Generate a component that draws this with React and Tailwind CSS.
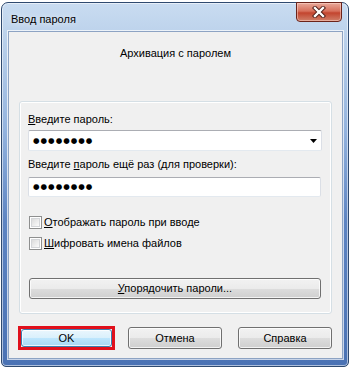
import React from 'react';

const font = { fontFamily: '"Liberation Sans", Arial, sans-serif' };

// Кнопка в стиле Windows 7
const WinButton = ({ children, className = '', focused = false }) => (
    <div
        className={`flex items-center justify-center rounded-[3px] border text-[11px] text-black leading-none ${focused
            ? 'border-[#3c7fb1] bg-[linear-gradient(#eaf6fd_0%,#d9f0fc_50%,#bee6fd_50%,#a7d9f5_100%)]'
            : 'border-[#707070] bg-[linear-gradient(#f2f2f2_0%,#ebebeb_50%,#dddddd_50%,#cfcfcf_100%)]'
            } shadow-[inset_0_0_0_1px_rgba(255,255,255,0.75)] ${className}`}
    >
        {children}
    </div>
);

const Checkbox = ({ children }) => (
    <div className="flex items-center h-[16px]">
        <div className="w-[13px] h-[13px] border border-[#8e8f8f] bg-white p-[1px]">
            <div className="w-full h-full border border-[#d4d6d9] bg-[linear-gradient(135deg,#dcdcdc,#fbfbfb)]" />
        </div>
        <span className="ml-[2px] text-[11px] text-black leading-[16px]">{children}</span>
    </div>
);

const Dots = () => (
    <span className="text-[7.5px] tracking-[1px] text-black leading-none font-bold" style={{ fontFamily: '"DejaVu Sans", sans-serif' }}>●●●●●●●●</span>
);

export default function App() {
    return (
        <div className="w-[351px] h-[370px] bg-white pt-[2px] pl-[1px]" style={font}>
            {/* Окно */}
            <div className="w-[348px] h-[365px] rounded-t-[7px] rounded-b-[5px] border border-[#2f4a70] bg-[linear-gradient(#c9dcf1_0%,#b7cee9_12%,#93b3de_35%,#5d84c2_60%,#4a72b4_100%)] shadow-[inset_0_0_0_1px_rgba(255,255,255,0.55)] flex flex-col pl-[6px] pr-[5px] pb-[7px]">
                {/* Заголовок */}
                <div className="h-[28px] flex items-start justify-between">
                    <span className="pt-[8px] pl-[3px] text-[11px] text-black leading-[16px] [text-shadow:0_0_6px_rgba(255,255,255,0.9)]">Ввод пароля</span>
                    <div className="w-[46px] h-[20px] -mt-[1px] mr-[1px] rounded-b-[4px] border border-[#6b231a] bg-[linear-gradient(#e9a99a_0%,#d7705c_45%,#c3452f_55%,#d0806a_100%)] shadow-[inset_0_0_0_1px_rgba(255,220,210,0.5)] flex items-center justify-center">
                        <svg width="14" height="12" viewBox="0 0 14 12">
                            <path d="M3 2 L11 10 M11 2 L3 10" stroke="#4a1a14" strokeWidth="4.2" strokeLinecap="square" />
                            <path d="M3 2 L11 10 M11 2 L3 10" stroke="#ffffff" strokeWidth="2.4" strokeLinecap="square" />
                        </svg>
                    </div>
                </div>

                {/* Клиентская область */}
                <div className="flex-1 bg-[#f0f0f0] border border-[#8da3c3] shadow-[0_0_0_1px_rgba(255,255,255,0.7)] flex flex-col">
                    <p className="mt-[13px] text-center text-[11px] leading-[16px] text-black">Архивация с паролем</p>

                    {/* Панель */}
                    <div className="mt-[40px] ml-[10px] w-[313px] h-[213px] rounded-[3px] border border-[#d5dfe5] shadow-[inset_0_0_0_1px_#ffffff] pl-[8px] pt-[9px] flex flex-col">
                        <span className="text-[11px] leading-[16px] text-black"><u>В</u>ведите пароль:</span>
                        <div className="mt-[3px] w-[294px] h-[21px] rounded-[2px] border border-[#abadb3] border-x-[#dbdfe6] border-b-[#e3e9ef] bg-white flex items-center justify-between pl-[4px] pr-[4px]">
                            <Dots />
                            <svg width="7" height="4" viewBox="0 0 7 4"><path d="M0 0 H7 L3.5 4 Z" fill="#000" /></svg>
                        </div>

                        <span className="mt-[5px] text-[11px] leading-[16px] text-black">Введите <u>п</u>ароль ещё раз (для проверки):</span>
                        <div className="mt-[5px] w-[293px] h-[20px] rounded-[2px] border border-[#abadb3] border-x-[#dbdfe6] border-b-[#e3e9ef] bg-white flex items-center pl-[4px]">
                            <Dots />
                        </div>

                        <div className="mt-[17px] ml-[1px] flex flex-col gap-[5px]">
                            <Checkbox><u>О</u>тображать пароль при вводе</Checkbox>
                            <Checkbox><u>Ш</u>ифровать имена файлов</Checkbox>
                        </div>

                        <WinButton className="mt-[27px] ml-[1px] w-[292px] h-[21px]"><span><u>У</u>порядочить пароли...</span></WinButton>
                    </div>

                    {/* Кнопки */}
                    <div className="mt-[12px] ml-[9px] flex items-center">
                        <div className="w-[97px] h-[24px] border-[3px] border-[#e0101c]">
                            <WinButton focused className="w-full h-full">OK</WinButton>
                        </div>
                        <WinButton className="ml-[13px] w-[94px] h-[22px]">Отмена</WinButton>
                        <WinButton className="ml-[16px] w-[94px] h-[22px]">Справка</WinButton>
                    </div>
                </div>
            </div>
        </div>
    );
}
